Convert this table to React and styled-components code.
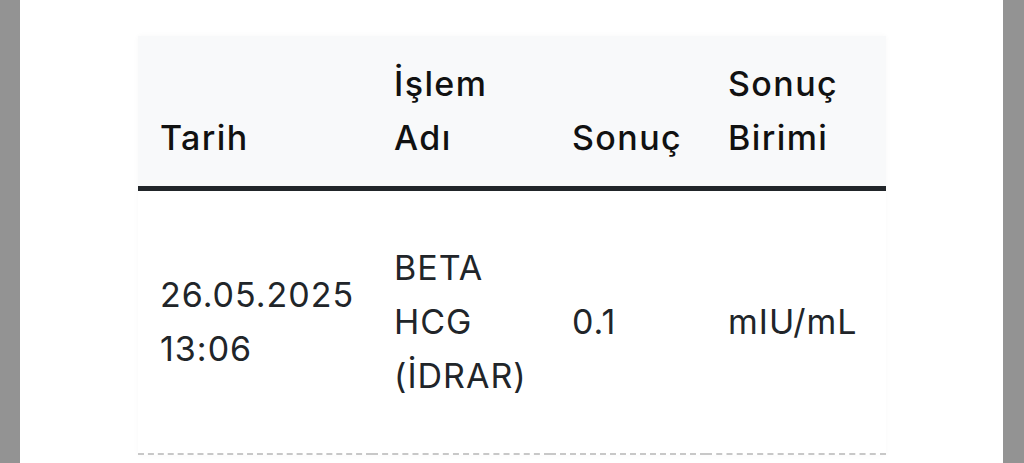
import React from "react";
import styled, { createGlobalStyle } from "styled-components";

const Global = createGlobalStyle`
  html, body { margin: 0; padding: 0; background: #939393; }
  body { font-family: Inter, "Open Sans", "Noto Sans", sans-serif; }
`;

const Page = styled.div`
  display: flex;
  justify-content: center;
  height: 463px;
  overflow: hidden;
  padding: 0 21px 0 20px;
`;

const Panel = styled.main`
  flex: 1;
  background: #ffffff;
  padding: 36px 117px 0 118px;
`;

const Table = styled.table`
  width: 748px;
  border-collapse: collapse;
  table-layout: fixed;
  box-shadow: 0 0 6px rgba(0, 0, 0, 0.03);
`;

const Th = styled.th`
  background: #f8f9fa;
  color: #111;
  text-align: left;
  vertical-align: bottom;
  padding: 21px 22px;
  font-size: 34px;
  line-height: 54px;
  font-weight: 500;
  letter-spacing: 1.4px;
  border-bottom: 5px solid #212529;
`;

const Td = styled.td`
  color: #212529;
  text-align: left;
  vertical-align: middle;
  padding: 50px 22px;
  font-size: 34px;
  line-height: 54px;
  font-weight: 400;
  letter-spacing: 1px;
  border-bottom: 2px dashed #c8c8c8;
`;

const cols = [234, 178, 156, 180];

export default function App() {
  return (
    <>
      <Global />
      <Page>
        <Panel>
          <Table>
            <colgroup>
              {cols.map((w, i) => (
                <col key={i} style={{ width: w }} />
              ))}
            </colgroup>
            <thead>
              <tr>
                <Th>Tarih</Th>
                <Th>İşlem Adı</Th>
                <Th>Sonuç</Th>
                <Th>Sonuç Birimi</Th>
              </tr>
            </thead>
            <tbody>
              <tr>
                <Td>26.05.2025 13:06</Td>
                <Td>BETA HCG (İDRAR)</Td>
                <Td>0.1</Td>
                <Td>mIU/mL</Td>
              </tr>
            </tbody>
          </Table>
        </Panel>
      </Page>
    </>
  );
}
